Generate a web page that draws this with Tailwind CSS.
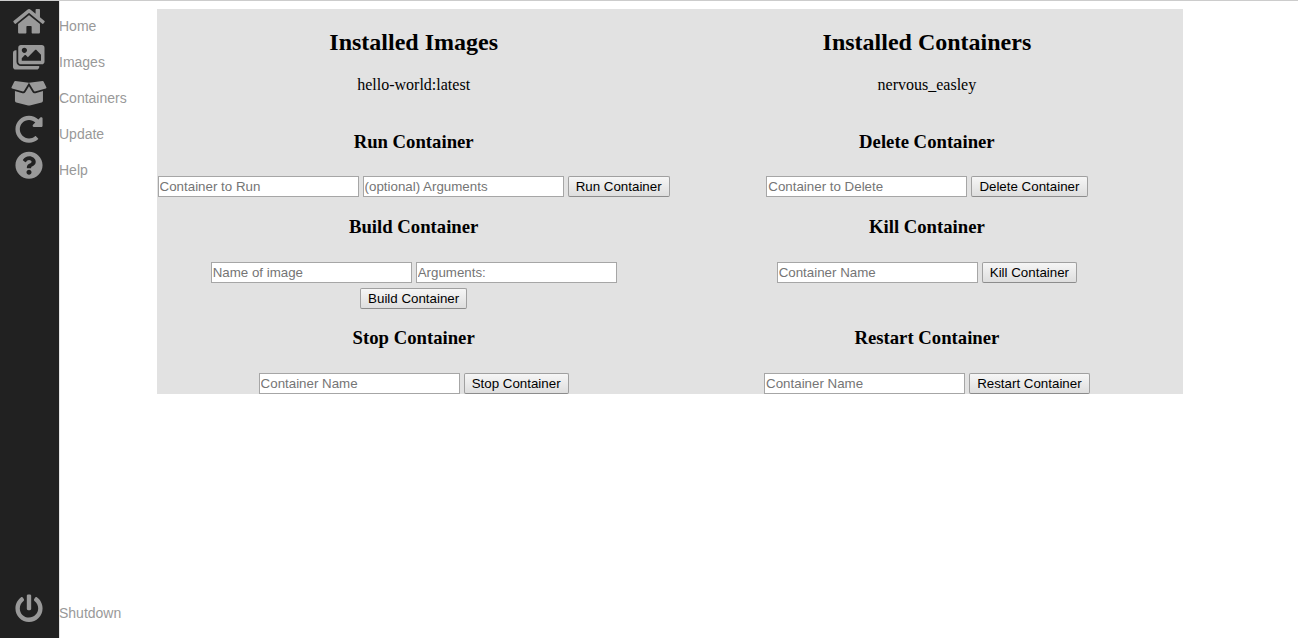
<!DOCTYPE html>
<html lang="en">
<head>
<meta charset="utf-8">
<title>Containers</title>
<script src="https://cdn.jsdelivr.net/npm/@tailwindcss/browser@4"></script>
</head>
<body class="h-screen overflow-hidden bg-white text-black font-['Liberation_Serif',serif]">
<div class="flex h-full border-t border-[#ccc]">
  <nav class="w-[157px] shrink-0 font-['Liberation_Sans',sans-serif] text-sm leading-5 text-[#999]">
    <div class="flex h-full w-[60px] flex-col justify-between border-r border-[#e5e5e5] bg-[#212121] bg-clip-padding pt-1.5 pb-4">
      <ul>
        <li class="flex h-9"><span class="flex w-[58px] shrink-0 justify-center"><svg class="h-7 w-[31.5px] shrink-0 fill-[#999]" viewBox="-5 -5 576 512"><path d="M488 312.7V456c0 13.3-10.7 24-24 24H348c-6.6 0-12-5.4-12-12V356c0-6.6-5.4-12-12-12h-72c-6.6 0-12 5.4-12 12v112c0 6.6-5.4 12-12 12H112c-13.3 0-24-10.7-24-24V312.7c0-3.6 1.6-7 4.4-9.3l188-154.8c4.4-3.6 10.8-3.6 15.3 0l188 154.8c2.7 2.3 4.3 5.7 4.3 9.3zm83.6-60.9L488 182.9V44.4c0-6.6-5.4-12-12-12h-56c-6.6 0-12 5.4-12 12V117l-89.5-73.7c-17.7-14.6-43.3-14.6-61 0L4.4 251.8c-5.1 4.2-5.8 11.8-1.6 16.9l25.5 31c4.2 5.1 11.8 5.8 16.9 1.6l235.2-193.7c4.4-3.6 10.8-3.6 15.3 0l235.2 193.7c5.1 4.2 12.7 3.5 16.9-1.6l25.5-31c4.2-5.2 3.4-12.7-1.7-16.9z"/></svg></span><a class="ml-px pt-[9px]">Home</a></li>
        <li class="flex h-9"><span class="flex w-[58px] shrink-0 justify-center"><svg class="h-7 w-[31.5px] shrink-0 fill-[#999]" viewBox="0 -5 576 512"><path d="M480 416v16c0 26.51-21.49 48-48 48H48c-26.51 0-48-21.49-48-48V176c0-26.51 21.49-48 48-48h16v208c0 44.112 35.888 80 80 80h336zm96-80V80c0-26.51-21.49-48-48-48H144c-26.51 0-48 21.49-48 48v256c0 26.51 21.49 48 48 48h384c26.51 0 48-21.49 48-48zM256 128c0 26.51-21.49 48-48 48s-48-21.49-48-48 21.49-48 48-48 48 21.49 48 48zm-96 144l55.515-55.515c4.686-4.686 12.284-4.686 16.971 0L272 256l135.515-135.515c4.686-4.686 12.284-4.686 16.971 0L512 208v112H160v-48z"/></svg></span><a class="ml-px pt-[9px]">Images</a></li>
        <li class="flex h-9"><span class="flex w-[58px] shrink-0 justify-center"><svg class="h-7 w-[35px] shrink-0 overflow-visible fill-[#999]" viewBox="10 -5 640 512"><path d="M425.7 256c-16.9 0-32.8-9-41.4-23.4L320 126l-64.2 106.6c-8.7 14.5-24.6 23.5-41.5 23.5-4.5 0-9-.6-13.3-1.9L64 215v178c0 14.7 10 27.5 24.2 31l216.2 54.1c10.2 2.5 20.9 2.5 31 0L551.8 424c14.2-3.6 24.2-16.4 24.2-31V215l-137 39.1c-4.3 1.3-8.8 1.9-13.3 1.9zm212.6-112.2L586.8 41c-3.1-6.2-9.8-9.8-16.7-8.9L320 64l91.7 152.1c3.8 6.3 11.4 9.3 18.5 7.3l197.9-56.5c9.9-2.9 14.7-13.9 10.2-23.1zM53.2 41L1.7 143.8c-4.6 9.2.3 20.2 10.1 23l197.9 56.5c7.1 2 14.7-1 18.5-7.3L320 64 69.8 32.1c-6.9-.8-13.5 2.7-16.6 8.9z"/></svg></span><a class="ml-px pt-[9px]">Containers</a></li>
        <li class="flex h-9"><span class="flex w-[58px] shrink-0 justify-center"><svg class="size-7 shrink-0 fill-[#999]" viewBox="0 -5 512 512"><path d="M256.455 8c66.269.119 126.437 26.233 170.859 68.685l35.715-35.715C478.149 25.851 504 36.559 504 57.941V192c0 13.255-10.745 24-24 24H345.941c-21.382 0-32.09-25.851-16.971-40.971l41.75-41.75c-30.864-28.899-70.801-44.907-113.23-45.273-92.398-.798-170.283 73.977-169.484 169.442C88.764 348.009 162.184 424 256 424c41.127 0 79.997-14.678 110.629-41.556 4.743-4.161 11.906-3.908 16.368.553l39.662 39.662c4.872 4.872 4.631 12.815-.482 17.433C378.202 479.813 319.926 504 256 504 119.034 504 8.001 392.967 8 256.002 7.999 119.193 119.646 7.755 256.455 8z"/></svg></span><a class="ml-px pt-[9px]">Update</a></li>
        <li class="flex h-9"><span class="flex w-[58px] shrink-0 justify-center"><svg class="size-7 shrink-0 fill-[#999]" viewBox="0 -5 512 512"><path d="M504 256c0 136.997-111.043 248-248 248S8 392.997 8 256C8 119.083 119.043 8 256 8s248 111.083 248 248zM262.655 90c-54.497 0-89.255 22.957-116.549 63.758-3.536 5.286-2.353 12.415 2.715 16.258l34.699 26.31c5.205 3.947 12.621 3.008 16.665-2.122 17.864-22.658 30.113-35.797 57.303-35.797 20.429 0 45.698 13.148 45.698 32.958 0 14.976-12.363 22.667-32.534 33.976C247.128 238.528 216 254.941 216 296v4c0 6.627 5.373 12 12 12h56c6.627 0 12-5.373 12-12v-1.333c0-28.462 83.186-29.647 83.186-106.667 0-58.002-60.165-102-116.531-102zM256 338c-25.365 0-46 20.635-46 46 0 25.364 20.635 46 46 46s46-20.636 46-46c0-25.365-20.635-46-46-46z"/></svg></span><a class="ml-px pt-[9px]">Help</a></li>
      </ul>
      <div class="flex h-7"><span class="flex w-[58px] shrink-0 justify-center"><svg class="size-7 shrink-0 fill-[#999]" viewBox="0 -7 512 512"><path d="M400 54.1c63 45 104 118.6 104 201.9 0 136.8-110.8 247.7-247.5 248C120 504.3 8.2 393 8 256.4 7.9 173.1 48.9 99.3 111.8 54.2c11.7-8.3 28-4.8 35 7.7L162.6 90c5.9 10.5 3.1 23.8-6.6 31-41.5 30.8-68 79.6-68 134.9-.1 92.3 74.5 168.1 168 168.1 91.6 0 168.6-74.2 168-169.1-.3-51.8-24.7-101.8-68.1-134-9.7-7.2-12.4-20.5-6.5-30.9l15.8-28.1c7-12.4 23.2-16.1 34.8-7.8zM296 264V24c0-13.3-10.7-24-24-24h-32c-13.3 0-24 10.7-24 24v240c0 13.3 10.7 24 24 24h32c13.3 0 24-10.7 24-24z"/></svg></span><a class="ml-px pt-[9px]">Shutdown</a></div>
    </div>
  </nav>

  <main class="mt-2 grid h-[385px] w-[1026px] grid-cols-[513.3px_513.2px] grid-rows-[110px_86px_111px_78px] bg-[#e2e2e2] text-center [&_h2]:text-2xl [&_h2]:leading-[27px] [&_h2]:font-bold [&_h3]:text-[18.72px] [&_h3]:leading-[21px] [&_h3]:font-bold [&_form]:flex [&_form]:flex-wrap [&_form]:justify-center [&_form]:gap-x-1 [&_form]:gap-y-[5px] [&_form]:font-['Liberation_Sans',sans-serif] [&_form]:text-[13.333px] [&_form]:leading-[15px] [&_input]:h-[21px] [&_input]:w-[201px] [&_input]:border [&_input]:border-[#a6a6a6] [&_input]:bg-white [&_input]:px-px [&_input]:placeholder:text-[#757575] [&_button]:h-[21px] [&_button]:rounded-xs [&_button]:border [&_button]:border-[#a0a0a0] [&_button]:border-b-[#8c8c8c] [&_button]:bg-linear-to-b [&_button]:from-[#f6f6f6] [&_button]:to-[#dedede] [&_button]:px-[7.1px]">
    <section class="pt-5"><h2>Installed Images</h2><p class="mt-5 text-base leading-[18px]">hello-world:latest</p></section>
    <section class="pt-5"><h2>Installed Containers</h2><p class="mt-5 text-base leading-[18px]">nervous_easley</p></section>

    <section class="pt-3"><h3>Run Container</h3><form class="mt-6"><input placeholder="Container to Run"><input placeholder="(optional) Arguments"><button type="button">Run Container</button></form></section>
    <section class="pt-3"><h3>Delete Container</h3><form class="mt-6"><input placeholder="Container to Delete"><button type="button">Delete Container</button></form></section>

    <section class="pt-[11px]"><h3>Build Container</h3><form class="mx-12 mt-[25px]"><input placeholder="Name of image"><input placeholder="Arguments:"><button type="button">Build Container</button></form></section>
    <section class="pt-[11px]"><h3>Kill Container</h3><form class="mt-[25px]"><input placeholder="Container Name"><button type="button">Kill Container</button></form></section>

    <section class="pt-[11px]"><h3>Stop Container</h3><form class="mt-[25px]"><input placeholder="Container Name"><button type="button">Stop Container</button></form></section>
    <section class="pt-[11px]"><h3>Restart Container</h3><form class="mt-[25px]"><input placeholder="Container Name"><button type="button">Restart Container</button></form></section>
  </main>
</div>
</body>
</html>
